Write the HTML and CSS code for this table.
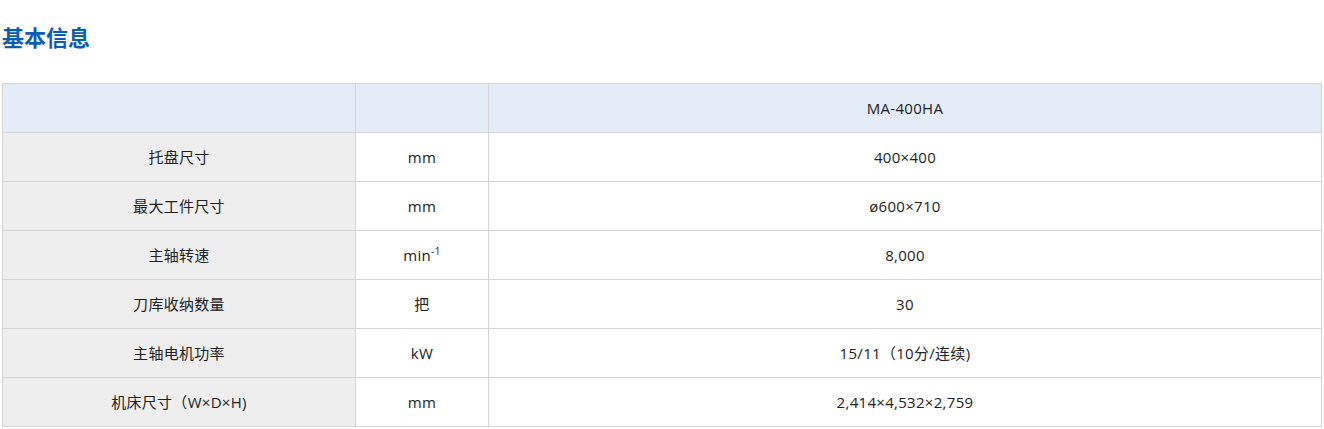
FILE: index.html
```html
<!DOCTYPE html>
<html lang="zh-CN">
<head>
<meta charset="utf-8">
<title>基本信息</title>
<link rel="stylesheet" href="styles.css">
</head>
<body>
<div class="page">
  <h2 class="title">基本信息</h2>
  <table class="spec">
    <colgroup>
      <col class="c-name">
      <col class="c-unit">
      <col class="c-val">
    </colgroup>
    <thead>
      <tr><th class="h-name"></th><th></th><th>MA-400HA</th></tr>
    </thead>
    <tbody>
      <tr><td class="name">托盘尺寸</td><td>mm</td><td>400×400</td></tr>
      <tr><td class="name">最大工件尺寸</td><td>mm</td><td>ø600×710</td></tr>
      <tr><td class="name">主轴转速</td><td>min<sup>-1</sup></td><td>8,000</td></tr>
      <tr><td class="name">刀库收纳数量</td><td>把</td><td>30</td></tr>
      <tr><td class="name">主轴电机功率</td><td>kW</td><td>15/11（10分/连续)</td></tr>
      <tr><td class="name">机床尺寸（W×D×H)</td><td>mm</td><td>2,414×4,532×2,759</td></tr>
    </tbody>
  </table>
</div>
</body>
</html>
```

FILE: styles.css
```css
html, body {
  margin: 0;
  padding: 0;
  background: #ffffff;
}

.page {
  padding: 20px 2px 0 2px;
  font-family: "Open Sans", "Noto Sans CJK SC", sans-serif;
  color: #222222;
}

.title {
  margin: 0 0 31px 0;
  font-family: "Noto Sans CJK SC", sans-serif;
  font-size: 22px;
  line-height: 32px;
  font-weight: 700;
  color: #0b5cb3;
}

.spec {
  width: 1320px;
  border-collapse: collapse;
  table-layout: fixed;
  font-size: 15px;
  letter-spacing: 0.3px;
}

.c-name { width: 353px; }
.c-unit { width: 133px; }

.spec th,
.spec td {
  border: 1px solid #d4d4d4;
  height: 48px;
  padding: 0;
  text-align: center;
  vertical-align: middle;
  font-weight: 400;
  line-height: 20px;
}

.spec thead th {
  background: #e4ecf7;
}

.spec td.name {
  background: #eeeeee;
}

.spec sup {
  font-size: 10px;
  line-height: 0;
  vertical-align: 6px;
}
```
